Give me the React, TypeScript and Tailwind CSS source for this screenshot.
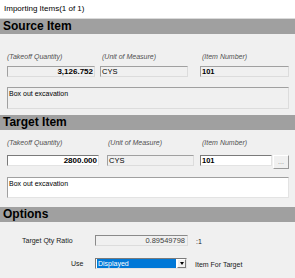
import React from "react";

const lbl = "text-[7px] italic text-[#505050] leading-[10px] whitespace-nowrap";
const sunkenDisabled =
  "h-[11px] bg-[#f0f0f0] border border-t-[#a0a0a0] border-l-[#a0a0a0] border-b-[#dcdcdc] border-r-[#dcdcdc] text-[7.5px] leading-[9px] text-black whitespace-nowrap overflow-hidden";
const sunkenWhite =
  "h-[11px] bg-white border border-t-[#7a7a7a] border-l-[#7a7a7a] border-b-[#e3e3e3] border-r-[#e3e3e3] text-[7.5px] leading-[9px] text-black whitespace-nowrap overflow-hidden";

function Band({ title }: { title: string }) {
  return (
    <div className="h-[15px] bg-[#a0a0a0] pl-[3px] text-[12px] font-bold leading-[15px] text-black">
      {title}
    </div>
  );
}

export default function App() {
  return (
    <div className="w-[295px] h-[278px] bg-[#f0f0f0] overflow-hidden font-['Liberation_Sans',Arial,sans-serif] text-black">
      <div className="h-[19px] bg-white border-b border-[#dadada] pl-[4px] text-[8px] leading-[18px]">
        Importing Items(1 of 1)
      </div>

      <Band title="Source Item" />
      <div className="pt-[18px] pb-[6px]">
        <div className="flex h-[10px]">
          <div className={`${lbl} ml-[7px] w-[95px]`}>(Takeoff Quantity)</div>
          <div className={`${lbl} w-[100px]`}>(Unit of Measure)</div>
          <div className={lbl}>(Item Number)</div>
        </div>
        <div className="flex mt-[4px]">
          <div className={`${sunkenDisabled} ml-[7px] w-[88px] text-right pr-[1px] font-bold text-[8px]`}>
            3,126.752
          </div>
          <div className={`${sunkenDisabled} ml-[5px] w-[88px] pl-[1px]`}>CYS</div>
          <div className={`${sunkenDisabled} ml-[12px] w-[89px] pl-[1px] font-bold`}>101</div>
        </div>
        <div className="ml-[7px] mt-[10px] w-[282px] h-[22px] bg-[#f0f0f0] border border-t-[#a0a0a0] border-l-[#a0a0a0] border-b-[#dcdcdc] border-r-[#dcdcdc] text-[7px] leading-[9px] pl-[1px] pt-[1px]">
          Box out excavation
        </div>
      </div>

      <Band title="Target Item" />
      <div className="pt-[8px] pb-[9px]">
        <div className="flex h-[10px]">
          <div className={`${lbl} ml-[7px] w-[101px]`}>(Takeoff Quantity)</div>
          <div className={`${lbl} w-[94px]`}>(Unit of Measure)</div>
          <div className={lbl}>(Item Number)</div>
        </div>
        <div className="flex items-start mt-[7px]">
          <div className={`${sunkenWhite} ml-[7px] w-[92px] text-right pr-[1px] font-bold text-[8px]`}>
            2800.000
          </div>
          <div className={`${sunkenDisabled} ml-[8px] w-[87px] pl-[1px]`}>CYS</div>
          <div className={`${sunkenWhite} ml-[6px] w-[72px] pl-[1px] font-bold`}>101</div>
          <div className="ml-[1px] w-[16px] h-[14px] bg-[#f0f0f0] border border-t-[#ffffff] border-l-[#ffffff] border-b-[#9a9a9a] border-r-[#9a9a9a] text-[7px] leading-[11px] text-center text-[#8a8a8a]">
            ...
          </div>
        </div>
        <div className="ml-[7px] mt-[8px] w-[282px] h-[21px] bg-white border border-t-[#a0a0a0] border-l-[#a0a0a0] border-b-[#e3e3e3] border-r-[#e3e3e3] text-[7px] leading-[9px] pl-[1px] pt-[1px]">
          Box out excavation
        </div>
      </div>

      <Band title="Options" />
      <div className="pt-[13px]">
        <div className="flex items-center h-[11px]">
          <div className="ml-[22px] w-[73px] text-[7px] leading-[10px] text-[#202020]">Target Qty Ratio</div>
          <div className="w-[93px] h-[11px] bg-[#f0f0f0] border border-t-[#8a8a8a] border-l-[#8a8a8a] border-b-[#dcdcdc] border-r-[#dcdcdc] text-right pr-[2px] text-[7.5px] leading-[9px] text-[#404040]">
            0.89549798
          </div>
          <div className="ml-[8px] text-[7px] leading-[10px] mt-[3px] text-[#202020]">:1</div>
        </div>
        <div className="flex items-center h-[11px] mt-[12px]">
          <div className="ml-[71px] w-[24px] text-[7px] leading-[10px] text-[#202020]">Use</div>
          <div className="flex w-[92px] h-[11px] bg-white border border-t-[#7a7a7a] border-l-[#7a7a7a] border-b-[#e3e3e3] border-r-[#e3e3e3]">
            <div className="flex-1 bg-[#0078d7] text-white text-[7px] leading-[9px] pl-[1px] ml-[1px]">
              Displayed
            </div>
            <div className="w-[9px] h-[9px] bg-[#f0f0f0] border border-t-[#ffffff] border-l-[#ffffff] border-b-[#7a7a7a] border-r-[#7a7a7a] flex items-center justify-center ml-[1px]">
              <div className="w-0 h-0 border-l-[2.5px] border-r-[2.5px] border-t-[3px] border-l-transparent border-r-transparent border-t-black" />
            </div>
          </div>
          <div className="ml-[8px] text-[7px] leading-[10px] mt-[2px] text-[#202020]">Item For Target</div>
        </div>
      </div>
    </div>
  );
}
